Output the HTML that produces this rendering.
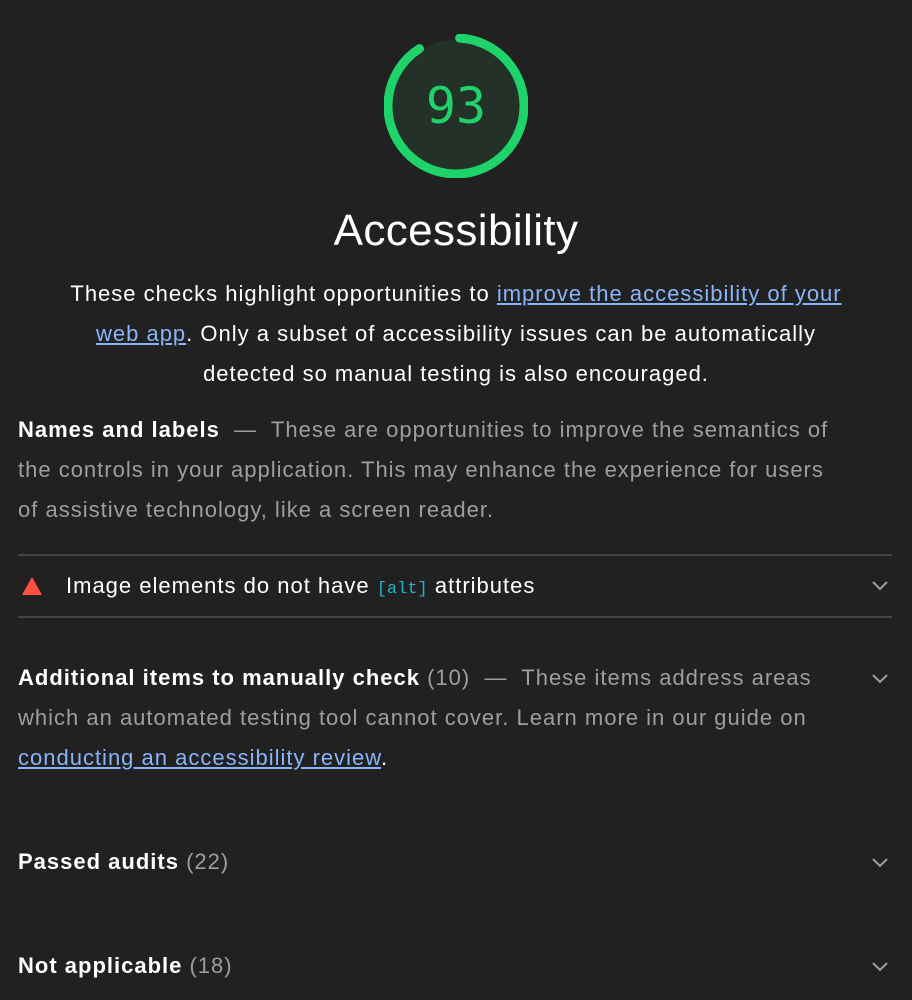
<!DOCTYPE html>
<html><head><style>
body{margin:0;background:#212121;width:912px;height:1000px;overflow:hidden;font-family:"Liberation Sans",sans-serif;color:#fff}
.g{position:absolute;left:384px;top:34px}
.t{position:absolute;top:206px;width:912px;text-align:center;font-size:44px;letter-spacing:0.4px}
.d{position:absolute;top:274px;left:50px;width:812px;text-align:center;font-size:22px;line-height:40px;color:#fff;letter-spacing:1px}
a{color:#8ab4f8;text-decoration:underline}
.s{position:absolute;left:18px;width:828px;font-size:22px;line-height:40px;color:#9e9e9e;letter-spacing:1px}
.s b{color:#fff}
.hr{position:absolute;left:18px;width:874px;height:2px;background:#444}
.ch{position:absolute;left:871px;width:18px;height:18px}
code{font-family:"Liberation Mono",monospace;color:#26b0c9;font-size:17px;letter-spacing:0}
</style></head><body>
<svg class="g" width="144" height="144" viewBox="0 0 144 144">
<circle cx="72" cy="72" r="66" fill="#233128"/>
<circle cx="72" cy="72" r="68" fill="none" stroke="#1ed46a" stroke-width="9" stroke-linecap="round" stroke-dasharray="385 428" transform="rotate(-87 72 72)"/>
<text x="72" y="89" text-anchor="middle" font-family="DejaVu Sans Mono,monospace" font-size="50" fill="#1ed46a">93</text>
</svg>
<div class="t">Accessibility</div>
<div class="d">These checks highlight opportunities to <a>improve the accessibility of your web app</a>. Only a subset of accessibility issues can be automatically detected so manual testing is also encouraged.</div>
<div class="s" style="top:410px"><b>Names and labels</b> &nbsp;—&nbsp; These are opportunities to improve the semantics of the controls in your application. This may enhance the experience for users of assistive technology, like a screen reader.</div>
<div class="hr" style="top:554px"></div>
<svg style="position:absolute;left:22px;top:577px" width="20" height="18"><polygon points="10,0 20,18 0,18" fill="#ff4e42"/></svg>
<div class="s" style="top:566px;left:66px;color:#fff">Image elements do not have <code>[alt]</code> attributes</div>
<svg class="ch" style="top:577px" viewBox="0 0 18 18"><path d="M2 5 L9 12 L16 5" fill="none" stroke="#9e9e9e" stroke-width="2"/></svg>
<div class="hr" style="top:616px"></div>
<div class="s" style="top:658px"><b>Additional items to manually check</b> (10) &nbsp;—&nbsp; These items address areas which an automated testing tool cannot cover. Learn more in our guide on <a>conducting an accessibility review</a><span style="color:#fff">.</span></div>
<svg class="ch" style="top:670px" viewBox="0 0 18 18"><path d="M2 5 L9 12 L16 5" fill="none" stroke="#9e9e9e" stroke-width="2"/></svg>
<div class="s" style="top:842px"><b>Passed audits</b> (22)</div>
<svg class="ch" style="top:854px" viewBox="0 0 18 18"><path d="M2 5 L9 12 L16 5" fill="none" stroke="#9e9e9e" stroke-width="2"/></svg>
<div class="s" style="top:946px"><b>Not applicable</b> (18)</div>
<svg class="ch" style="top:958px" viewBox="0 0 18 18"><path d="M2 5 L9 12 L16 5" fill="none" stroke="#9e9e9e" stroke-width="2"/></svg>
</body></html>
